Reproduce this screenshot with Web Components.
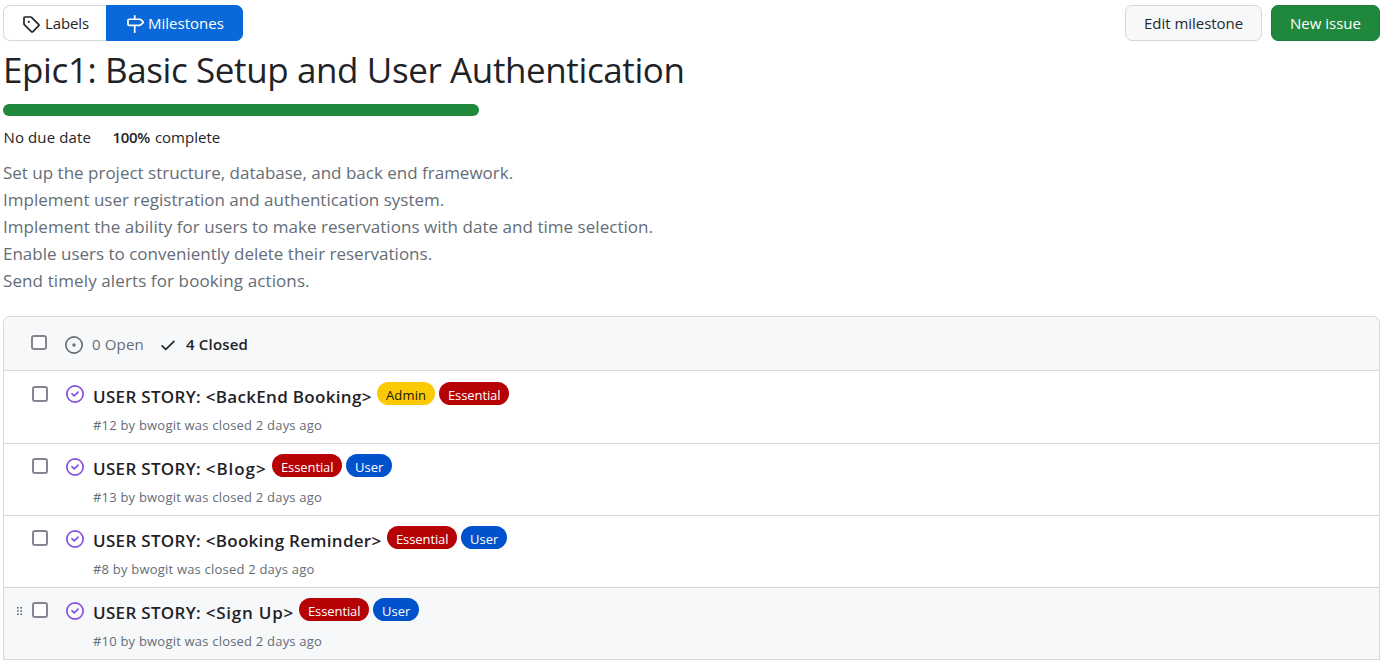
<!DOCTYPE html>
<html lang="en">
<head>
<meta charset="utf-8">
<title>Epic1: Basic Setup and User Authentication</title>
<style>
body{margin:0;background:#fff;color:#1f2328;font-family:"Open Sans","Noto Sans",sans-serif;font-size:15px}
</style>
</head>
<body>
<milestone-page></milestone-page>

<script>
const define=(name,html,setup)=>customElements.define(name,class extends HTMLElement{
  connectedCallback(){
    if(this.shadowRoot)return;
    const root=this.attachShadow({mode:'open'});
    const t=document.createElement('template');
    t.innerHTML=html;
    root.append(t.content.cloneNode(true));
    if(setup)setup(this,root);
  }
});

const ICONS={
  tag:['0 0 16 16','M1 7.775V2.75C1 1.784 1.784 1 2.75 1h5.025c.464 0 .91.184 1.238.513l6.25 6.25a1.75 1.75 0 0 1 0 2.474l-5.026 5.026a1.75 1.75 0 0 1-2.474 0l-6.25-6.25A1.752 1.752 0 0 1 1 7.775Zm1.5 0c0 .066.026.13.073.177l6.25 6.25a.25.25 0 0 0 .354 0l5.025-5.025a.25.25 0 0 0 0-.354l-6.25-6.25a.25.25 0 0 0-.177-.073H2.75a.25.25 0 0 0-.25.25ZM6 5a1 1 0 1 1 0 2 1 1 0 0 1 0-2Z'],
  milestone:['0 0 16 16','M7.75 0a.75.75 0 0 1 .75.75V3h3.634c.414 0 .814.147 1.13.414l2.07 1.75a1.75 1.75 0 0 1 0 2.672l-2.07 1.75a1.75 1.75 0 0 1-1.13.414H8.5v5.25a.75.75 0 0 1-1.5 0V10H2.75A1.75 1.75 0 0 1 1 8.25v-3.5C1 3.784 1.784 3 2.75 3H7V.75A.75.75 0 0 1 7.75 0Zm4.384 8.5a.25.25 0 0 0 .161-.06l2.07-1.75a.248.248 0 0 0 0-.38l-2.07-1.75a.25.25 0 0 0-.161-.06H2.75a.25.25 0 0 0-.25.25v3.5c0 .138.112.25.25.25h9.384Z'],
  open:['0 0 16 16','M8 9.5a1.5 1.5 0 1 0 0-3 1.5 1.5 0 0 0 0 3Z M8 0a8 8 0 1 1 0 16A8 8 0 0 1 8 0ZM1.5 8a6.5 6.5 0 1 0 13 0 6.5 6.5 0 0 0-13 0Z'],
  check:['0 0 16 16','M13.78 4.22a.75.75 0 0 1 0 1.06l-7.25 7.25a.75.75 0 0 1-1.06 0L2.22 9.28a.751.751 0 0 1 .018-1.042.751.751 0 0 1 1.042-.018L6 10.94l6.72-6.72a.75.75 0 0 1 1.06 0Z'],
  closed:['0 0 16 16','M11.28 6.78a.75.75 0 0 0-1.06-1.06L7.25 8.69 5.78 7.22a.75.75 0 0 0-1.06 1.06l2 2a.75.75 0 0 0 1.06 0l3.5-3.5ZM16 8A8 8 0 1 1 0 8a8 8 0 0 1 16 0Zm-1.5 0a6.5 6.5 0 1 0-13 0 6.5 6.5 0 0 0 13 0Z'],
  grip:['0 0 6 9','M0 0h1.6v1.6H0zM3.4 0H5v1.6H3.4zM0 3.2h1.6v1.6H0zM3.4 3.2H5v1.6H3.4zM0 6.4h1.6V8H0zM3.4 6.4H5V8H3.4z']
};
define('octo-icon',`<style>
:host{display:block;flex:none;width:18px;height:18px}
svg{display:block;width:100%;height:100%;fill:currentColor}
</style><svg><path/></svg>`,(el,r)=>{
  const [box,d]=ICONS[el.getAttribute('name')];
  r.querySelector('svg').setAttribute('viewBox',box);
  r.querySelector('path').setAttribute('d',d);
});

define('ui-button',`<style>
:host{box-sizing:border-box;display:flex;align-items:center;height:36px;border:1px solid #d3d8dd;border-radius:7px;line-height:20px;white-space:nowrap;padding:0 18px 1px}
:host([kind=edit]){width:137px;background:#f6f8fa;letter-spacing:-.03px;color:#24292f}
:host([kind=new]){width:109px;background:#1f883d;border-color:#1c7f39;color:#fff}
:host([kind=labels]){width:103px;padding:0 0 1px 18px;border-right:0;border-radius:7px 0 0 7px;gap:5px}
:host([kind=milestones]){width:137px;padding:0 0 1px 19px;border-color:#0969da;background:#0969da;color:#fff;border-radius:0 7px 7px 0;gap:4px}
::slotted(octo-icon){margin-top:3px}
</style><slot></slot>`);

define('progress-bar',`<style>
:host{display:block;width:476px;height:12px;border-radius:6px;background:#1f883d}
</style>`);

define('check-box',`<style>
:host{box-sizing:border-box;display:block;flex:none;width:16px;height:16px;border:2px solid #85858f;border-radius:3px;background:#fff}
</style>`);

define('issue-label',`<style>
:host{box-sizing:border-box;display:block;height:23px;line-height:26px;padding:0 9px;border-radius:12px;font-size:13px;white-space:nowrap;text-align:center;color:#fff}
:host([kind=Admin]){width:58px;background:#fbca04;color:#1a1500;letter-spacing:.15px}
:host([kind=Essential]){width:70px;background:#b60205;letter-spacing:-.1px}
:host([kind=User]){width:46px;background:#0052cc}
</style><slot></slot>`);

define('issue-row',`<style>
:host{box-sizing:border-box;display:flex;height:72px;border-bottom:1px solid #d5d9df;background:#fff}
:host([first]){height:73px}
:host([first]) .body,:host([first]) .side{margin-top:1px}
:host([first]) .state{margin-top:13px}
:host([hovered]){background:#f6f8fa}
.side{display:flex;align-items:flex-start;width:89px;flex:none}
.grip{width:28px;padding:19px 0 0 13px;box-sizing:border-box;color:#57606a}
.grip octo-icon{width:6px;height:9px}
check-box{margin-top:14px}
.state{margin:14px 0 0 18px;color:#8250df}
.head{display:flex;height:36px}
h3{margin:13px 0 0;font-size:17px;font-weight:600;line-height:24px;white-space:nowrap;flex:none;letter-spacing:.31px}
.labels{display:flex;gap:4px;padding-top:10px}
p{margin:8px 0 0;font-size:13px;line-height:18px;color:#656d76;letter-spacing:.205px;white-space:nowrap}
</style>
<div class="side"><div class="grip"></div><check-box></check-box><octo-icon class="state" name="closed"></octo-icon></div>
<div class="body"><div class="head"><h3><slot name="title"></slot></h3><div class="labels"><slot name="labels"></slot></div></div><p><slot></slot></p></div>`,(el,r)=>{
  r.querySelector('h3').style.width=el.getAttribute('title-width')+'px';
  if(el.hasAttribute('hovered'))r.querySelector('.grip').innerHTML='<octo-icon name="grip"></octo-icon>';
});

define('issue-list',`<style>
:host{display:block;border:1px solid #d5d9df;border-bottom:0;border-radius:7px 7px 0 0;overflow:hidden}
header{box-sizing:border-box;display:flex;align-items:center;height:54px;padding:0 0 0 27px;background:#f6f8fa;border-bottom:1px solid #d5d9df;line-height:20px}
check-box{margin:-3px 18px 0 0;width:16px;height:15px}
octo-icon{margin-top:3px}
.open{margin:0 15px 0 9px;color:#656d76;letter-spacing:.15px;width:52px}
.closed{margin:0 0 0 9px;font-weight:600;letter-spacing:.18px}
</style>
<header><check-box></check-box><octo-icon name="open" style="color:#656d76"></octo-icon><span class="open">0 Open</span><octo-icon name="check"></octo-icon><span class="closed">4 Closed</span></header>
<slot></slot>`);

define('milestone-page',`<style>
:host{display:block;padding:5px 6px 0 3px}
nav{display:flex}
.actions{display:flex;gap:9px;margin-left:auto}
h1{margin:5px 0 0;font-size:35px;font-weight:400;line-height:48px;letter-spacing:-.395px;white-space:nowrap}
progress-bar{margin-top:10px}
.stats{display:flex;gap:22px;margin-top:11px;padding-left:.5px;line-height:20px;white-space:nowrap}
.stats span:first-child{letter-spacing:.12px;width:87px}
b{font-weight:600;letter-spacing:-.3px}
.pct{word-spacing:1px}
.description{margin:12px 0 22px;font-size:17px;line-height:27px;color:#656d76;white-space:nowrap}
.description div:nth-child(3){letter-spacing:.033px}
.description div:nth-child(5){letter-spacing:.11px}
</style>
<nav><ui-button kind="labels"><octo-icon name="tag"></octo-icon><span style="letter-spacing:-.1px">Labels</span></ui-button><ui-button kind="milestones"><octo-icon name="milestone"></octo-icon><span>Milestones</span></ui-button>
<div class="actions"><ui-button kind="edit">Edit milestone</ui-button><ui-button kind="new">New issue</ui-button></div></nav>
<h1>Epic1: Basic Setup and User Authentication</h1>
<progress-bar></progress-bar>
<div class="stats"><span>No due date</span><span class="pct"><b>100%</b> complete</span></div>
<div class="description"><div>Set up the project structure, database, and back end framework.</div><div>Implement user registration and authentication system.</div><div>Implement the ability for users to make reservations with date and time selection.</div><div>Enable users to conveniently delete their reservations.</div><div>Send timely alerts for booking actions.</div></div>
<issue-list>
<issue-row first title-width="284"><span slot="title">USER STORY: &lt;BackEnd Booking&gt;</span><issue-label slot="labels" kind="Admin">Admin</issue-label><issue-label slot="labels" kind="Essential">Essential</issue-label>#12 by bwogit was closed 2 days ago</issue-row>
<issue-row title-width="179"><span slot="title">USER STORY: <span style="letter-spacing:.95px">&lt;Blog&gt;</span></span><issue-label slot="labels" kind="Essential">Essential</issue-label><issue-label slot="labels" kind="User">User</issue-label>#13 by bwogit was closed 2 days ago</issue-row>
<issue-row title-width="294"><span slot="title">USER STORY: <span style="letter-spacing:.28px">&lt;Booking Reminder&gt;</span></span><issue-label slot="labels" kind="Essential">Essential</issue-label><issue-label slot="labels" kind="User">User</issue-label>#8 by bwogit was closed 2 days ago</issue-row>
<issue-row hovered title-width="206"><span slot="title">USER STORY: <span style="letter-spacing:.76px">&lt;Sign Up&gt;</span></span><issue-label slot="labels" kind="Essential">Essential</issue-label><issue-label slot="labels" kind="User">User</issue-label>#10 by bwogit was closed 2 days ago</issue-row>
</issue-list>`);
</script>
</body>
</html>
